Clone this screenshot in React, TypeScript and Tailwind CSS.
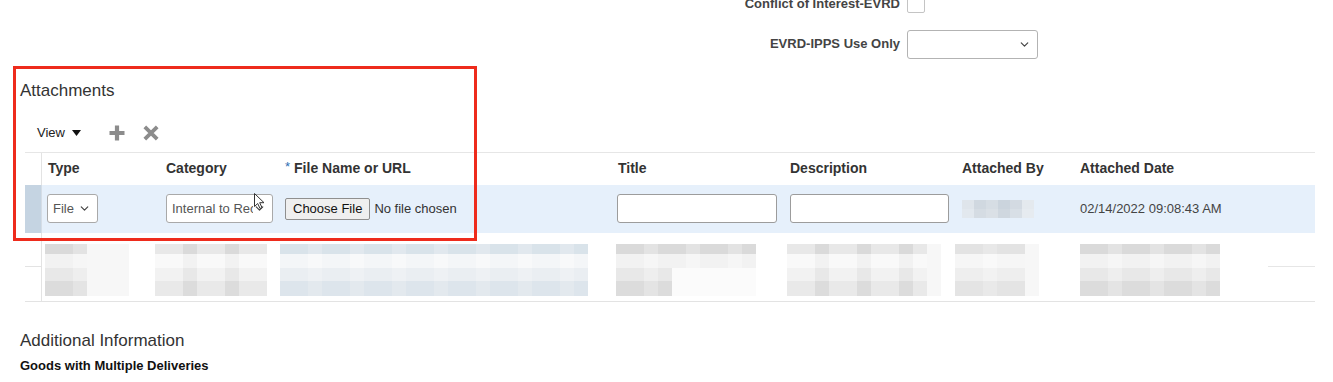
import { ChevronDown } from 'lucide-react'

const gray = [
  ['bg-[#e3e3e3]', 'bg-[#dadada]', 'bg-[#e8e8e8]'],
  ['bg-[#f6f6f6]', 'bg-[#f2f2f2]', 'bg-[#f9f9f9]'],
  ['bg-[#eeeeee]', 'bg-[#e8e8e8]', 'bg-[#f2f2f2]'],
  ['bg-[#e4e4e4]', 'bg-[#dcdcdc]', 'bg-[#e9e9e9]'],
]

const blue = [
  ['bg-[#d9e3ea]', 'bg-[#d0dbe4]', 'bg-[#e1e8ee]'],
  ['bg-[#f4f6f8]', 'bg-[#f0f3f6]', 'bg-[#f8f9fa]'],
  ['bg-[#eaeef2]', 'bg-[#e5eaef]', 'bg-[#eef1f4]'],
  ['bg-[#dde5ec]', 'bg-[#d4dee7]', 'bg-[#e3e9ee]'],
]

const bandHeights = ['h-[10px]', 'h-[14px]', 'h-[13px]', 'h-[15px]']

const columns = [
  { name: 'Type', width: 'w-[118px]' },
  { name: 'Category', width: 'w-[119px]' },
  { name: 'File Name or URL', width: 'w-[333px]', required: true },
  { name: 'Title', width: 'w-[172px]' },
  { name: 'Description', width: 'w-[172px]' },
  { name: 'Attached By', width: 'w-[118px]' },
  { name: 'Attached Date', width: 'w-[241px]' },
]

// blurred rows, kept as coarse pixel blocks
const blurred = [
  { gap: 'ml-[3px]', cols: 6, fade: 3, tone: gray, seed: 1, lengths: [6, 6, 6, 6] },
  { gap: 'ml-[26px]', cols: 8, fade: 0, tone: gray, seed: 2, lengths: [8, 8, 8, 8] },
  { gap: 'ml-[13px]', cols: 22, fade: 0, tone: blue, seed: 3, lengths: [22, 22, 22, 22] },
  { gap: 'ml-[28px]', cols: 10, fade: 0, tone: gray, seed: 4, lengths: [10, 10, 4, 4] },
  { gap: 'ml-[31px]', cols: 11, fade: 1, tone: gray, seed: 5, lengths: [11, 11, 11, 11] },
  { gap: 'ml-[14px]', cols: 6, fade: 1, tone: gray, seed: 6, lengths: [6, 6, 6, 6] },
  { gap: 'ml-[41px]', cols: 10, fade: 0, tone: gray, seed: 7, lengths: [10, 10, 10, 10] },
]

function Pixels({ cols, fade, tone, seed, lengths }: { cols: number; fade: number; tone: string[][]; seed: number; lengths: number[] }) {
  return (
    <div className="flex flex-col">
      {bandHeights.map((h, band) => (
        <div key={band} className={`flex ${h}`}>
          {Array.from({ length: cols }).map((_, c) => {
            let cls = tone[band][(seed * 7 + c * 5 + band * 3 + c * c) % 3]
            if (c >= lengths[band]) cls = 'bg-[#fbfbfb]'
            else if (c >= cols - fade) cls = 'bg-[#f7f7f7]'
            return <div key={c} className={`w-[14px] ${cls}`} />
          })}
        </div>
      ))}
    </div>
  )
}

function FakeSelect({ text, width }: { text: string; width: string }) {
  return (
    <div className={`flex h-[29px] ${width} items-center overflow-hidden rounded-[3px] border border-[#a9a9a9] bg-white pl-[5px] pr-[6px] text-[13px] text-[#555]`}>
      <span className="flex-1 overflow-hidden whitespace-nowrap">{text}</span>
      <ChevronDown className="h-[13px] w-[13px] shrink-0 text-[#444]" strokeWidth={2.2} />
    </div>
  )
}

export default function App() {
  return (
    <div className="relative h-[382px] w-[1333px] overflow-hidden bg-white font-['Liberation_Sans',Arial,sans-serif] text-[#333]">
      <div className="-mt-[6px] grid grid-cols-[900px_auto] items-center gap-x-[7px] gap-y-[16px]">
        <span className="text-right text-[13px] font-bold text-[#444]">Conflict of Interest-EVRD</span>
        <div className="h-[18px] w-[18px] rounded-[2px] border border-[#c4c4c4] bg-white" />
        <span className="text-right text-[13px] font-bold text-[#444]">EVRD-IPPS Use Only</span>
        <div className="flex h-[29px] w-[131px] items-center justify-end rounded-[3px] border border-[#b3b3b3] bg-white pr-[6px]">
          <ChevronDown className="h-[13px] w-[13px] text-[#444]" strokeWidth={2.2} />
        </div>
      </div>

      <h2 className="ml-[20px] mt-[22px] text-[17px] leading-[20px] text-[#333]">Attachments</h2>

      <div className="ml-[37px] mt-[20px] flex h-[24px] items-center">
        <span className="text-[13px] text-[#222]">View</span>
        <svg className="ml-[7px]" width="9" height="6" viewBox="0 0 9 6">
          <path d="M0 0h9L4.5 6z" fill="#111" />
        </svg>
        <svg className="ml-[28px]" width="16" height="16" viewBox="0 0 16 16">
          <path d="M8 0.5v15M0.5 8h15" stroke="#8c8c8c" strokeWidth="4.2" />
        </svg>
        <svg className="ml-[18px]" width="16" height="16" viewBox="0 0 16 16">
          <path d="M1.8 1.8l12.4 12.4M14.2 1.8l-12.4 12.4" stroke="#8c8c8c" strokeWidth="3.8" />
        </svg>
      </div>

      <div className="ml-[25px] mt-[7px] w-[1290px] border-t border-[#e6e6e6]">
        <div className="flex h-[32px]">
          <div className="w-[17px] border-r border-[#e3e3e3]" />
          {columns.map((col) => (
            <div key={col.name} className={`flex ${col.width} items-center pl-[6px] text-[14px] font-bold text-[#333]`}>
              {col.required && <span className="mr-[4px] -mt-[4px] text-[13px] font-normal text-[#2c6fb3]">*</span>}
              {col.name}
            </div>
          ))}
        </div>

        <div className="flex h-[48px] bg-[#e6f0fb]">
          <div className="w-[17px] border-r border-[#d5dde6] bg-[#c5d4e2]" />
          <div className="flex w-[118px] items-center pl-[5px]">
            <FakeSelect text="File" width="w-[51px]" />
          </div>
          <div className="flex w-[119px] items-center pl-[6px]">
            <FakeSelect text="Internal to Receiver" width="w-[107px]" />
          </div>
          <div className="flex w-[333px] items-center pl-[6px]">
            <button className="h-[22px] rounded-[2px] border border-[#8f8f8f] bg-[#efefef] px-[7px] text-[13px] text-[#111]">
              Choose File
            </button>
            <span className="ml-[4px] text-[13px] text-[#333]">No file chosen</span>
          </div>
          <div className="flex w-[172px] items-center pl-[5px]">
            <div className="h-[29px] w-[160px] rounded-[3px] border border-[#9c9c9c] bg-white" />
          </div>
          <div className="flex w-[172px] items-center pl-[6px]">
            <div className="h-[29px] w-[159px] rounded-[3px] border border-[#9c9c9c] bg-white" />
          </div>
          <div className="flex w-[118px] items-center pl-[6px]">
            <div className="flex flex-col">
              <div className="flex h-[9px]">
                <div className="w-[12px] bg-[#dfe5eb]" />
                <div className="w-[12px] bg-[#d0d8e0]" />
                <div className="w-[12px] bg-[#d6dde4]" />
                <div className="w-[12px] bg-[#cbd4dd]" />
                <div className="w-[12px] bg-[#d3dae2]" />
                <div className="w-[12px] bg-[#e4e9ee]" />
              </div>
              <div className="flex h-[9px]">
                <div className="w-[12px] bg-[#e2e8ee]" />
                <div className="w-[12px] bg-[#d5dce3]" />
                <div className="w-[12px] bg-[#dae0e6]" />
                <div className="w-[12px] bg-[#cfd7df]" />
                <div className="w-[12px] bg-[#d8dfe6]" />
                <div className="w-[12px] bg-[#e6ebf0]" />
              </div>
            </div>
          </div>
          <div className="flex w-[241px] items-center pl-[6px] text-[13px] text-[#444]">02/14/2022 09:08:43 AM</div>
        </div>

        <div className="flex h-[69px] border-b border-[#e3e3e3]">
          <div className="w-[17px] border-r border-[#e3e3e3]">
            <div className="h-[34px] border-b border-[#e3e3e3]" />
          </div>
          <div className="flex pt-[11px]">
            {blurred.map((b, i) => (
              <div key={i} className={b.gap}>
                <Pixels cols={b.cols} fade={b.fade} tone={b.tone} seed={b.seed} lengths={b.lengths} />
              </div>
            ))}
          </div>
          <div className="ml-[48px] w-[47px]">
            <div className="h-[34px] border-b border-[#e6e6e6]" />
          </div>
        </div>
      </div>

      <h2 className="ml-[20px] mt-[29px] text-[17px] leading-[20px] text-[#333]">Additional Information</h2>
      <div className="ml-[20px] mt-[7px] text-[13px] font-bold leading-[16px] text-[#111]">Goods with Multiple Deliveries</div>

      {/* annotation box and mouse pointer */}
      <div className="absolute left-[13px] top-[66px] h-[175px] w-[464px] border-[3px] border-[#ee2b1c]" />
      <svg className="absolute left-[254px] top-[193px]" width="11" height="16" viewBox="0 0 11 16">
        <path d="M0.5 0.5v13l3.2-3 2.3 5 2-0.9-2.3-4.9h4.3z" fill="#fff" stroke="#333" strokeWidth="1" />
      </svg>
    </div>
  )
}
